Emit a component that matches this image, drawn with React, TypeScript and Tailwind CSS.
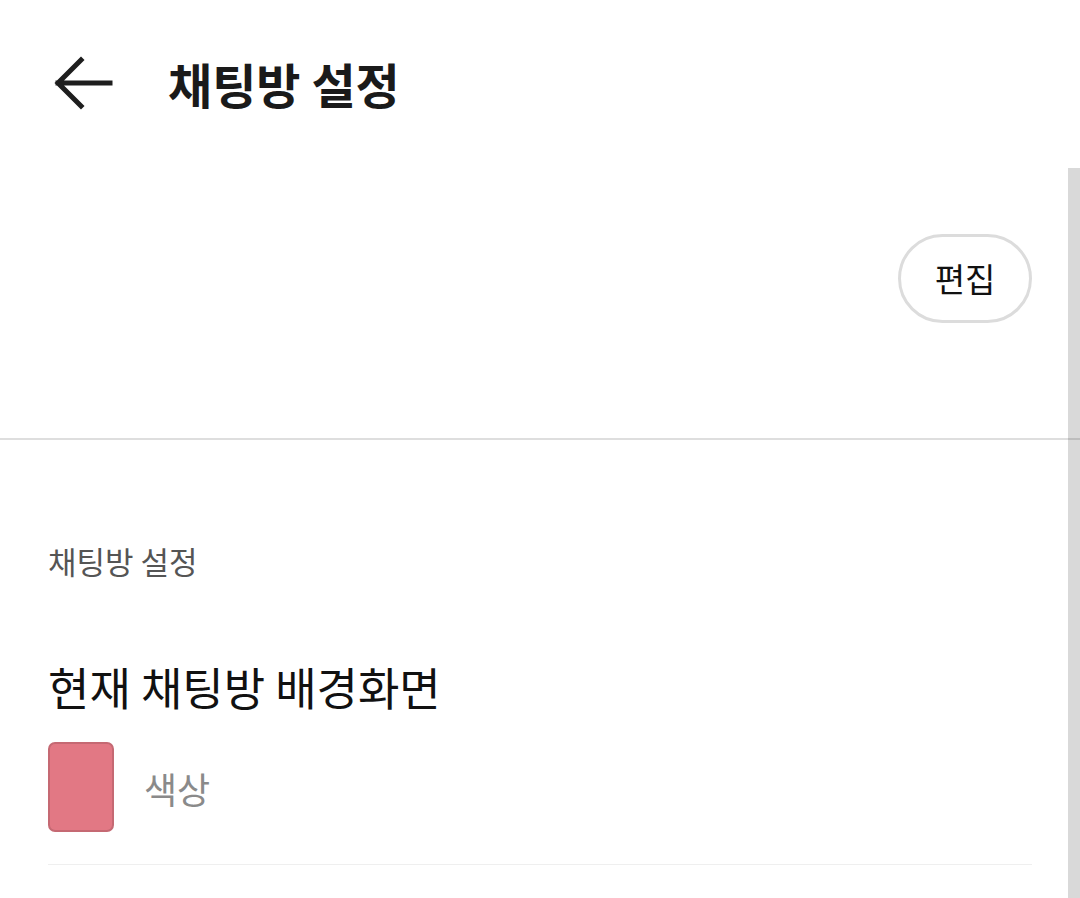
export default function App() {
  return (
    <div
      className="relative w-[1080px] h-[898px] overflow-hidden bg-white text-[#111]"
      style={{ fontFamily: '"Noto Sans CJK KR", "Noto Sans", sans-serif' }}
    >
      {/* Header */}
      <header className="h-[168px] flex items-center pl-[53px]">
        <svg width="62" height="56" viewBox="0 0 62 56" fill="none" className="mt-[-2px]">
          <path
            d="M57 28H5M28 5L5 28L28 51"
            stroke="#1e1e1e"
            strokeWidth="5"
            strokeLinecap="square"
          />
        </svg>
        <h1 className="ml-[53px] mt-[-3px] text-[48px] font-bold leading-none text-[#1a1a1a]">
          채팅방 설정
        </h1>
      </header>

      {/* Profile / edit area */}
      <section className="h-[270px] flex justify-end items-start pt-[66px] pr-[48px]">
        <button className="w-[134px] h-[89px] rounded-full border-[3px] border-[#dcdcdc] text-[33px] leading-none text-[#111]">
          편집
        </button>
      </section>
      <div className="h-[2px] bg-[#dedede]" />

      {/* Settings */}
      <section className="px-[48px]">
        <p className="mt-[99px] text-[31px] leading-[44px] text-[#555]">채팅방 설정</p>
        <h2 className="mt-[74px] text-[45px] leading-[60px] text-[#111]">현재 채팅방 배경화면</h2>
        <div className="mt-[25px] flex items-center gap-[30px]">
          <div className="w-[66px] h-[90px] rounded-[7px] bg-[#e27884] border-2 border-[#c56973]" />
          <span className="text-[36px] leading-none text-[#8a8a8a] mt-[2px]">색상</span>
        </div>
        <div className="mt-[32px] h-[1px] bg-[#efefef]" />
      </section>

      {/* Overlay scrollbar */}
      <div className="absolute right-0 top-[168px] bottom-0 w-[12px] bg-black/15" />
    </div>
  );
}
